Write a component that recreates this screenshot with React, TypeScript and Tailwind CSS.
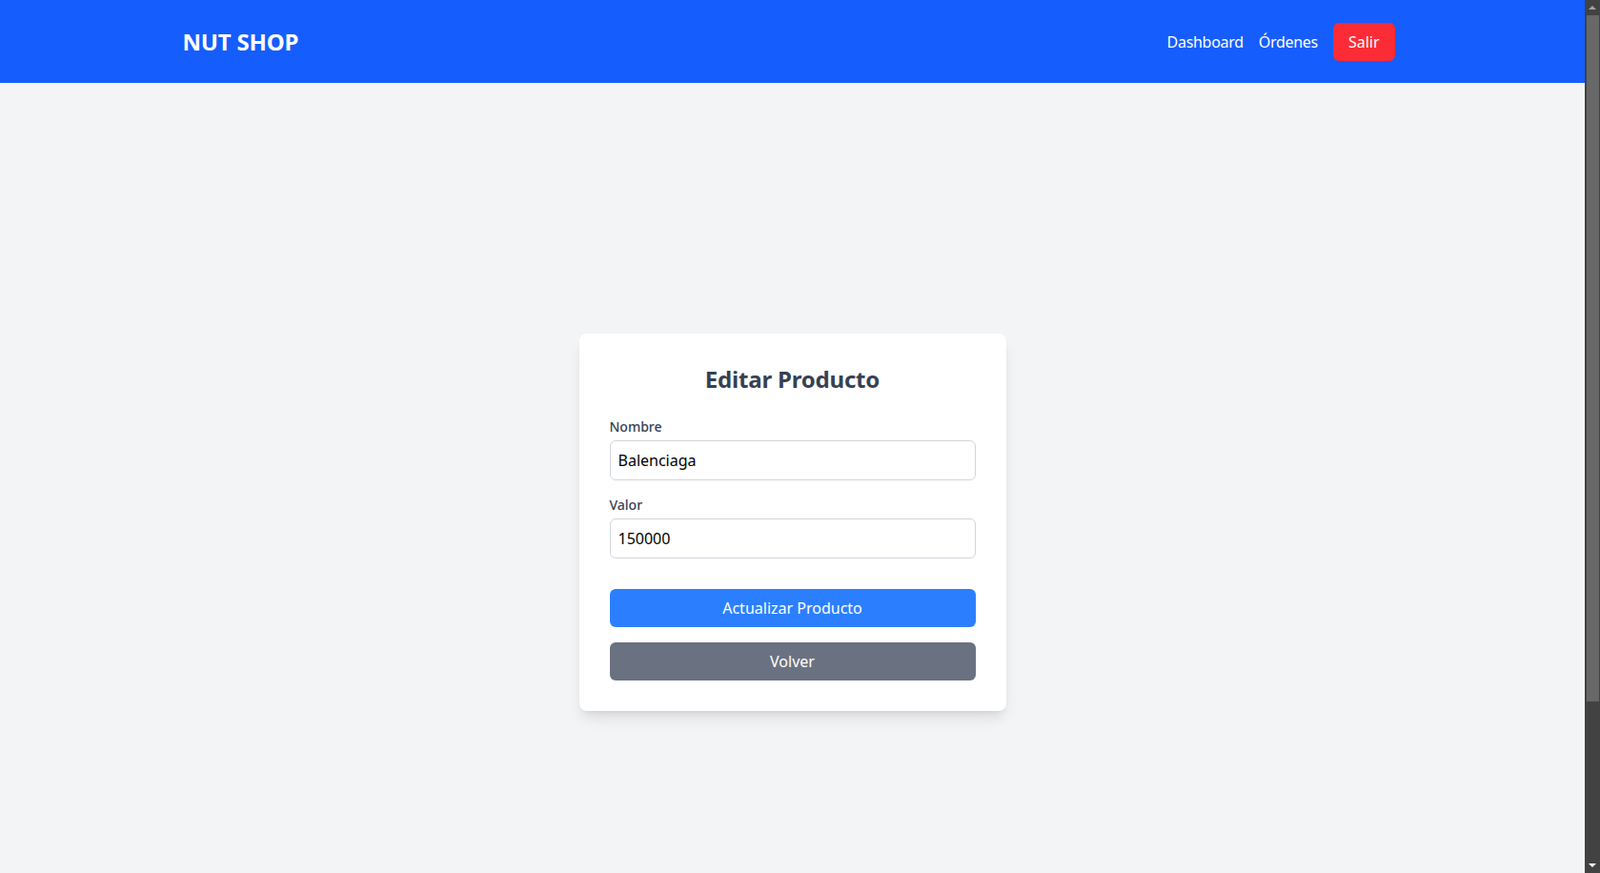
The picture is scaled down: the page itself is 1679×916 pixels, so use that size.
import React, { useState } from 'react';

const font = { fontFamily: '"Noto Sans", "Open Sans", Arial, sans-serif' };

const Navbar: React.FC = () => {
  return (
    <header className="bg-blue-600 h-[87px] shrink-0">
      <div className="w-[1280px] mx-auto h-full flex items-center justify-between pr-2">
        <span className="text-white text-2xl font-bold tracking-[-0.2px]">NUT SHOP</span>
        <nav className="flex items-center gap-4">
          <a href="#" className="text-white text-base tracking-[-0.3px]">Dashboard</a>
          <a href="#" className="text-white text-base tracking-[-0.3px]">Órdenes</a>
          <button className="bg-red-500 text-white text-base px-4 h-10 rounded-md">Salir</button>
        </nav>
      </div>
    </header>
  );
};

const Scrollbar: React.FC = () => (
  <div className="w-4 shrink-0 bg-[#424242] flex flex-col">
    <div className="h-4 flex items-center justify-center">
      <div className="w-0 h-0 border-l-[4px] border-r-[4px] border-b-[4px] border-l-transparent border-r-transparent border-b-[#a3a3a3]" />
    </div>
    <div className="h-[720px] ml-[2px] mr-[1px] bg-[#686868]" />
    <div className="flex-1" />
    <div className="h-4 flex items-center justify-center">
      <div className="w-0 h-0 border-l-[4px] border-r-[4px] border-t-[4px] border-l-transparent border-r-transparent border-t-white" />
    </div>
  </div>
);

const App: React.FC = () => {
  const [nombre, setNombre] = useState('Balenciaga');
  const [valor, setValor] = useState('150000');

  return (
    <div className="flex h-[916px] overflow-hidden" style={font}>
      <div className="flex-1 flex flex-col bg-gray-100">
        <Navbar />

        {/* Form */}
        <main className="flex-1 flex justify-center pt-[263px]">
          <div className="w-[448px] h-fit bg-white rounded-lg shadow-lg p-8">
            <h2 className="text-2xl font-bold text-gray-700 text-center mb-6 tracking-[-0.2px]">Editar Producto</h2>

            <div className="mb-4">
              <label className="block text-sm font-medium text-gray-700 mb-1">Nombre</label>
              <input
                value={nombre}
                onChange={(e) => setNombre(e.target.value)}
                className="w-full h-[42px] px-2 border border-gray-300 rounded-md text-base text-black bg-white"
              />
            </div>

            <div className="mb-4">
              <label className="block text-sm font-medium text-gray-700 mb-1">Valor</label>
              <input
                value={valor}
                onChange={(e) => setValor(e.target.value)}
                className="w-full h-[42px] px-2 border border-gray-300 rounded-md text-base text-black bg-white"
              />
            </div>

            <button className="w-full h-10 mt-4 bg-blue-500 text-white text-base rounded-md">
              Actualizar Producto
            </button>
            <button className="w-full h-10 mt-4 bg-gray-500 text-white text-base rounded-md">
              Volver
            </button>
          </div>
        </main>
      </div>
      <Scrollbar />
    </div>
  );
};

export default App;
